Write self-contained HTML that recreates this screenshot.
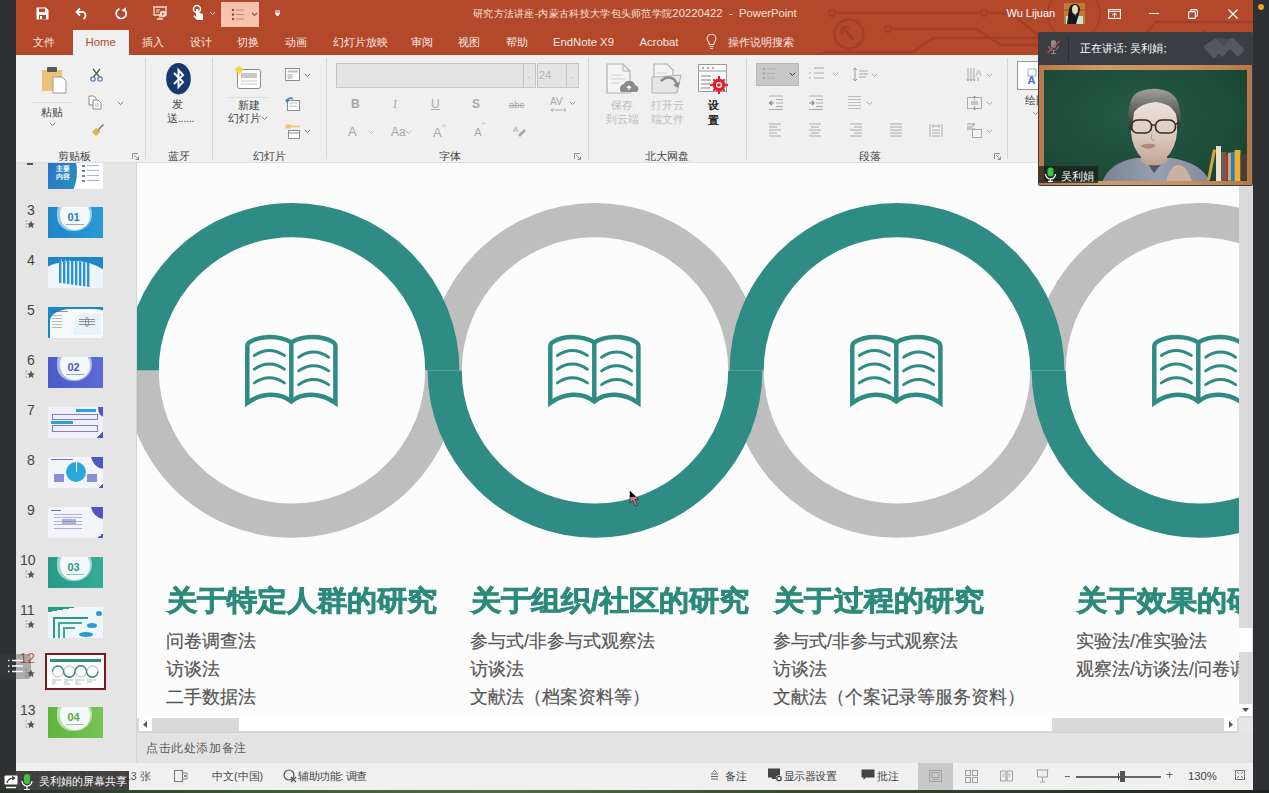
<!DOCTYPE html>
<html><head><meta charset="utf-8">
<style>
*{margin:0;padding:0;box-sizing:border-box}
html,body{width:1269px;height:793px;overflow:hidden;background:#2e3034;font-family:"Liberation Sans",sans-serif}
.a{position:absolute}
.t{position:absolute;white-space:nowrap;line-height:1}
#title{left:16px;top:0;width:1237px;height:55px;background:#b4482b;overflow:hidden}
#ribbon{left:16px;top:55px;width:1237px;height:108px;background:#f0f0f0}
#pane{left:16px;top:162px;width:121px;height:601px;background:#e5e5e5}
#slide{left:137px;top:162px;width:1102px;height:556px;background:#fcfcfc;overflow:hidden}
#vscroll{left:1239px;top:162px;width:14px;height:556px;background:#dadada}
#hscroll{left:137px;top:718px;width:1102px;height:14px;background:#d9d9d9}
#notes{left:137px;top:732px;width:1116px;height:31px;background:#e3e3e3;border-top:1px solid #d0d0d0}
#status{left:16px;top:763px;width:1237px;height:27px;background:#f0f0f0}
#bottom{left:0;top:790px;width:1269px;height:3px;background:#3c4a35}
.tab{position:absolute;top:37px;font-size:11px;line-height:11px;color:#fbe9e3;white-space:nowrap}
.rl{position:absolute;font-size:11px;line-height:11px;color:#444;white-space:nowrap}
.sep{position:absolute;top:58px;width:1px;height:100px;background:#d5d5d5}
.gi{position:absolute}
.num{position:absolute;left:26px;font-size:13px;line-height:13px;color:#444}
.thumb{position:absolute;left:47px;width:56px;height:31px;overflow:hidden}
.star{position:absolute;left:27px;font-size:9px;line-height:9px;color:#555}
.h{position:absolute;top:585px;font-size:29.8px;line-height:30px;font-weight:bold;color:#2b8a7b;-webkit-text-stroke:0.9px #2b8a7b;transform:scale(1,0.93);transform-origin:0 0;white-space:nowrap}
.b{position:absolute;font-size:17.6px;line-height:18px;color:#555;-webkit-text-stroke:0.2px #555;white-space:nowrap}
.st{position:absolute;top:771px;font-size:11px;line-height:11px;color:#444;white-space:nowrap}
</style></head><body>
<!-- TITLEBAR -->
<div id="title" class="a">
<svg class="a" style="left:0;top:0" width="1237" height="55">
<g stroke="#a43f26" stroke-width="2.4" fill="none" opacity="0.95">
<path d="M819,13 H965 M971,13 H995 L1025,38"/><circle cx="816" cy="13" r="3"/><circle cx="968" cy="13" r="3"/>
<path d="M875,29 H960 L985,45 H1060"/><circle cx="872" cy="29" r="3"/>
<circle cx="833" cy="34" r="14.5"/><path d="M826,27 L838,40 M826,27 H834 M826,27 V35" stroke-width="2.6"/>
<path d="M800,55 L810,52 H897 L917,38 H1065"/><circle cx="1068" cy="38" r="3"/><path d="M1071,40 L1090,55"/>
<path d="M1110,55 L1140,22 H1237" /><path d="M1160,55 L1190,30"/>
<circle cx="1058" cy="14" r="26" stroke-width="1.5"/>
</g>
</svg>
<!-- QAT -->
<svg class="a" style="left:20px;top:7px" width="13" height="13" viewBox="0 0 13 13"><path d="M0.5,0.5 H10 L12.5,3 V12.5 H0.5 Z" fill="#fff"/><rect x="3" y="1.5" width="6" height="3.5" fill="#b4482b"/><rect x="3" y="8" width="7" height="4.5" fill="#b4482b"/><rect x="4" y="9" width="2" height="3" fill="#fff"/></svg>
<svg class="a" style="left:59px;top:7px" width="14" height="13" viewBox="0 0 14 13"><path d="M5,1.5 L1.5,5 L5,8.5 M1.8,5 H8.5 A4,4 0 0 1 8.5,12" fill="none" stroke="#fff" stroke-width="1.8"/></svg>
<svg class="a" style="left:99px;top:7px" width="13" height="13" viewBox="0 0 13 13"><path d="M4.5,1.8 A5,5 0 1 0 10,3.2" fill="none" stroke="#fff" stroke-width="1.7"/><path d="M11,0.3 L10.8,5.2 L6.5,3.5 Z" fill="#fff"/></svg>
<svg class="a" style="left:136px;top:5px" width="17" height="17" viewBox="0 0 17 17"><path d="M1,2 H15 M2,2 V10 H14 V2 M8,10 V13 M5,14 H11" fill="none" stroke="#f6ddd5" stroke-width="1.3"/><circle cx="11" cy="9" r="3.2" fill="#f6ddd5"/><path d="M10,7.5 L12.5,9 L10,10.5Z" fill="#b4482b"/><path d="M4,5 H8 M4,7 H7" stroke="#f6ddd5" stroke-width="1"/></svg>
<svg class="a" style="left:176px;top:4px" width="12" height="17" viewBox="0 0 12 17"><circle cx="5" cy="5" r="3.5" fill="none" stroke="#fff" stroke-width="1.5"/><path d="M4,5 V13 L2,11 L1.5,12.5 L5,16 H11 V10 L6.5,8.5 V5" fill="#fff"/></svg>
<svg class="a" style="left:193px;top:11px" width="7" height="5"><path d="M1,1 L3.5,3.5 L6,1" fill="none" stroke="#f6ddd5" stroke-width="1"/></svg>
<div class="a" style="left:205px;top:2px;width:38px;height:25px;background:#f5c3ae"></div>
<svg class="a" style="left:215px;top:8px" width="16" height="13" viewBox="0 0 16 13"><g fill="#a8452a"><circle cx="2" cy="2" r="1.2"/><circle cx="2" cy="6.5" r="1.2"/><circle cx="2" cy="11" r="1.2"/></g><path d="M5,2 H13 M5,6.5 H13 M5,11 H13" stroke="#c8765c" stroke-width="0.9"/></svg>
<svg class="a" style="left:235px;top:12px" width="7" height="5"><path d="M1,1 L3.5,3.5 L6,1" fill="none" stroke="#b4482b" stroke-width="1.2"/></svg>
<svg class="a" style="left:258px;top:10px" width="7" height="7"><path d="M1,1 H6 M1,3 L3.5,6 L6,3Z" fill="#fff" stroke="#fff" stroke-width="1"/></svg>
<div class="t" style="left:457px;top:8px;font-size:10px;letter-spacing:0.3px;color:#fbe3da">研究方法讲座-内蒙古科技大学包头师范学院<span style="font-size:11.3px;letter-spacing:0">20220422&nbsp;&nbsp;-&nbsp;&nbsp;PowerPoint</span></div>
<div class="t" style="left:990.5px;top:8px;font-size:11px;color:#fff">Wu Lijuan</div>
<svg class="a" style="left:1048px;top:3px" width="21" height="21" viewBox="0 0 21 21"><rect width="21" height="21" fill="#c47a34"/><rect y="6" width="21" height="2" fill="#b06828"/><rect x="2" y="13" width="17" height="8" fill="#d0e0dc"/><path d="M3,21 L5,6 Q6,1 11,1 Q15,1 16,6 L15,11 L12,21 Z" fill="#15181a"/><ellipse cx="11" cy="6.5" rx="3" ry="4.5" fill="#e6dcb4"/><path d="M10,10 L12,10 L11.5,13 Z" fill="#d8d0b0"/></svg>
<svg class="a" style="left:1092px;top:9px" width="13" height="10" viewBox="0 0 13 10"><rect x="0.6" y="0.6" width="11.8" height="8.8" fill="none" stroke="#fff" stroke-width="1.1"/><path d="M0.6,2.5 H12.4" stroke="#fff" stroke-width="0.9"/><path d="M6.5,8 V4.5 M4.5,6.2 L6.5,4.2 L8.5,6.2" fill="none" stroke="#fff" stroke-width="1.1"/></svg>
<div class="a" style="left:1133px;top:13px;width:10px;height:1.2px;background:#fff"></div>
<svg class="a" style="left:1172px;top:9px" width="10" height="10" viewBox="0 0 10 10"><rect x="0.6" y="2.6" width="6.8" height="6.8" rx="1.2" fill="none" stroke="#fff" stroke-width="1.1"/><path d="M2.5,2.6 V2 A1.4,1.4 0 0 1 3.9,0.6 H8 A1.4,1.4 0 0 1 9.4,2 V6.1 A1.4,1.4 0 0 1 8,7.5 H7.4" fill="none" stroke="#fff" stroke-width="1.1"/></svg>
<svg class="a" style="left:1212px;top:9px" width="10" height="10" viewBox="0 0 10 10"><path d="M0.5,0.5 L9.5,9.5 M9.5,0.5 L0.5,9.5" stroke="#fff" stroke-width="1.2"/></svg>
<!-- TABS -->
<div class="a" style="left:57px;top:30px;width:56px;height:26px;background:#f0f0f0"></div>
<div class="tab" style="left:17px">文件</div>
<div class="tab" style="left:69.5px;color:#b4482b;font-size:11.4px">Home</div>
<div class="tab" style="left:126px">插入</div>
<div class="tab" style="left:173.5px">设计</div>
<div class="tab" style="left:221px">切换</div>
<div class="tab" style="left:268.5px">动画</div>
<div class="tab" style="left:316.5px">幻灯片放映</div>
<div class="tab" style="left:395px">审阅</div>
<div class="tab" style="left:441.5px">视图</div>
<div class="tab" style="left:489.5px">帮助</div>
<div class="tab" style="left:537px;font-size:11.3px">EndNote X9</div>
<div class="tab" style="left:623.5px;font-size:11.3px">Acrobat</div>
<svg class="a" style="left:690px;top:34px" width="11" height="16" viewBox="0 0 11 16"><path d="M3.3,10.5 C3.3,8 1,7 1,4.8 A4.5,4.5 0 0 1 10,4.8 C10,7 7.7,8 7.7,10.5 Z M3.6,12.5 H7.4 M4.3,14.5 H6.7" fill="none" stroke="#fbe9e3" stroke-width="1.1"/></svg>
<div class="tab" style="left:712px">操作说明搜索</div>
</div>
<!-- RIBBON -->
<div id="ribbon" class="a">
</div>
<div class="a" style="left:0;top:0;width:1269px;height:162px;pointer-events:none">
<svg class="a" style="left:41px;top:66px" width="27" height="28" viewBox="0 0 27 28"><rect x="1" y="4" width="20" height="21" fill="#eac27a"/><rect x="6" y="1" width="10" height="5" rx="1" fill="#5a5a5a"/><path d="M12,11 H21 L25,15 V27 H12 Z" fill="#fff" stroke="#9a9a9a" stroke-width="1"/></svg>
<div class="a" style="left:32px;top:102px;width:40px;height:1px;background:#dedede"></div>
<div class="t" style="left:41px;top:107px;font-size:11px;color:#444;">粘贴</div>
<svg class="a" style="left:49px;top:122px" width="7" height="5"><path d="M0.8,0.8 L3.5,3.5 L6.2,0.8" fill="none" stroke="#777" stroke-width="1"/></svg>
<svg class="a" style="left:90px;top:68px" width="13" height="14" viewBox="0 0 13 14"><path d="M3,1 L9.5,9 M10,1 L3.5,9" stroke="#555" stroke-width="1.2"/><circle cx="3" cy="11" r="2.2" fill="none" stroke="#4a7ab8" stroke-width="1.2"/><circle cx="10" cy="11" r="2.2" fill="none" stroke="#4a7ab8" stroke-width="1.2"/></svg>
<svg class="a" style="left:88px;top:95px" width="14" height="15" viewBox="0 0 14 15"><path d="M1,1 H6 L8,3 V10 H1 Z" fill="#fff" stroke="#8c8c8c" stroke-width="1"/><path d="M5,5 H10 L13,8 V14 H5 Z" fill="#fff" stroke="#8c8c8c" stroke-width="1"/><path d="M7,9 H11 M7,11 H11" stroke="#aaa" stroke-width="0.8"/></svg>
<svg class="a" style="left:117px;top:101px" width="7" height="5"><path d="M0.8,0.8 L3.5,3.5 L6.2,0.8" fill="none" stroke="#777" stroke-width="1"/></svg>
<svg class="a" style="left:90px;top:123px" width="15" height="14" viewBox="0 0 15 14"><path d="M8,6 L13,1 L14,2 L9,7 Z" fill="#777"/><path d="M2,9 L6,5 L10,9 L6,13 Z" fill="#e8b04a"/><path d="M6,5 L8,6.5 L9,7 L10,9" fill="#555"/></svg>
<div class="t" style="left:58px;top:151px;font-size:11px;color:#444;">剪贴板</div>
<svg class="a" style="left:132px;top:153px" width="7" height="7"><path d="M0.5,6 V0.5 H6 M2,2 L6.5,6.5 M3.5,6.5 H6.5 V3.5" fill="none" stroke="#888" stroke-width="0.9"/></svg>
<div class="a" style="left:145px;top:58px;width:1px;height:101px;background:#d6d6d6"></div>
<svg class="a" style="left:166px;top:63px" width="26" height="32" viewBox="0 0 26 32"><ellipse cx="12.5" cy="15.7" rx="12.3" ry="15.7" fill="#163a6b"/><path d="M8,10 L17,19 L12.5,24 V7 L17,12 L8,21" fill="none" stroke="#fff" stroke-width="2"/></svg>
<div class="t" style="left:172px;top:99px;font-size:11px;color:#444;">发</div>
<div class="t" style="left:167px;top:113px;font-size:11px;color:#444;letter-spacing:-0.3px">送......</div>
<div class="t" style="left:168px;top:151px;font-size:11px;color:#444;">蓝牙</div>
<div class="a" style="left:212px;top:58px;width:1px;height:101px;background:#d6d6d6"></div>
<svg class="a" style="left:233px;top:65px" width="30" height="26" viewBox="0 0 30 26"><rect x="4.5" y="4.5" width="23" height="19" rx="2" fill="#fff" stroke="#8a8a8a" stroke-width="1"/><rect x="8" y="8" width="16" height="5" fill="#c8c8c8"/><path d="M8,16 H24 M8,19 H24" stroke="#c8c8c8" stroke-width="1"/><circle cx="6" cy="5" r="3" fill="#f5d340"/><path d="M6,0 V10 M1,5 H11 M2.5,1.5 L9.5,8.5 M9.5,1.5 L2.5,8.5" stroke="#f5d340" stroke-width="0.8"/></svg>
<div class="a" style="left:228px;top:97px;width:40px;height:1px;background:#dcdcdc"></div>
<div class="t" style="left:238px;top:100px;font-size:11px;color:#444;">新建</div>
<div class="t" style="left:228px;top:113px;font-size:11px;color:#444;">幻灯片</div>
<svg class="a" style="left:261px;top:116px" width="7" height="5"><path d="M0.8,0.8 L3.5,3.5 L6.2,0.8" fill="none" stroke="#777" stroke-width="1"/></svg>
<svg class="a" style="left:285px;top:68px" width="16" height="14" viewBox="0 0 16 14"><rect x="0.5" y="0.5" width="14" height="12" fill="#fff" stroke="#8c8c8c"/><rect x="2.5" y="2.5" width="10" height="2" fill="#bbb"/><rect x="2.5" y="6" width="5" height="5" fill="#ccc"/></svg>
<svg class="a" style="left:304px;top:73px" width="7" height="5"><path d="M0.8,0.8 L3.5,3.5 L6.2,0.8" fill="none" stroke="#777" stroke-width="1"/></svg>
<svg class="a" style="left:285px;top:97px" width="16" height="14" viewBox="0 0 16 14"><rect x="2.5" y="3.5" width="12" height="10" fill="#fff" stroke="#8c8c8c"/><path d="M4,6 H12 M4,9 H12" stroke="#bbb"/><path d="M1.5,5 A4,4 0 0 1 8,2" fill="none" stroke="#3a7cd0" stroke-width="1.6"/><path d="M0,3 L3,6.5 L4,2Z" fill="#3a7cd0"/></svg>
<svg class="a" style="left:285px;top:124px" width="16" height="15" viewBox="0 0 16 15"><rect x="0.5" y="0.5" width="6" height="4" fill="#f2c46a"/><path d="M7,2.5 H15" stroke="#f2c46a" stroke-width="1.5"/><rect x="3.5" y="6.5" width="11" height="8" fill="#fff" stroke="#8c8c8c"/><path d="M4,9 H14" stroke="#8c8c8c"/></svg>
<svg class="a" style="left:304px;top:129px" width="7" height="5"><path d="M0.8,0.8 L3.5,3.5 L6.2,0.8" fill="none" stroke="#777" stroke-width="1"/></svg>
<div class="t" style="left:253px;top:151px;font-size:11px;color:#444;">幻灯片</div>
<div class="a" style="left:326px;top:58px;width:1px;height:101px;background:#d6d6d6"></div>
<div class="a" style="left:336px;top:63px;width:200px;height:25px;background:#e4e4e4;border:1px solid #c4c4c4"></div>
<div class="a" style="left:523px;top:63px;width:1px;height:25px;background:#c4c4c4"></div>
<div class="t" style="left:527px;top:73px;font-size:8px;color:#aaa;">-</div>
<div class="a" style="left:537px;top:63px;width:42px;height:25px;background:#e4e4e4;border:1px solid #c4c4c4"></div>
<div class="a" style="left:566px;top:63px;width:1px;height:25px;background:#c4c4c4"></div>
<div class="t" style="left:539px;top:70px;font-size:11px;color:#b4b4b4;">24</div>
<div class="t" style="left:570px;top:73px;font-size:8px;color:#aaa;">-</div>
<div class="t" style="left:351px;top:98px;font-size:12px;color:#a8a8a8;font-weight:bold">B</div>
<div class="t" style="left:393px;top:98px;font-size:12px;color:#a8a8a8;font-style:italic;font-family:Liberation Serif">I</div>
<div class="t" style="left:431px;top:98px;font-size:12px;color:#a8a8a8;text-decoration:underline">U</div>
<div class="t" style="left:472px;top:98px;font-size:12px;color:#a8a8a8;font-weight:bold">S</div>
<div class="t" style="left:509px;top:100px;font-size:9.5px;color:#a8a8a8;text-decoration:line-through">abc</div>
<div class="t" style="left:550px;top:97px;font-size:10px;color:#a8a8a8;">AV</div>
<svg class="a" style="left:550px;top:108px" width="17" height="4" viewBox="0 0 17 4"><path d="M1,2 H16 M1,2 L3,0.5 M1,2 L3,3.5 M16,2 L14,0.5 M16,2 L14,3.5" stroke="#a8a8a8" stroke-width="0.9" fill="none"/></svg>
<svg class="a" style="left:569px;top:101px" width="7" height="5"><path d="M0.8,0.8 L3.5,3.5 L6.2,0.8" fill="none" stroke="#999" stroke-width="1"/></svg>
<div class="t" style="left:348px;top:125px;font-size:13px;color:#a8a8a8;">A</div>
<svg class="a" style="left:368px;top:130px" width="7" height="5"><path d="M0.8,0.8 L3.5,3.5 L6.2,0.8" fill="none" stroke="#bbb" stroke-width="1"/></svg>
<div class="t" style="left:391px;top:126px;font-size:12px;color:#a8a8a8;">Aa</div>
<svg class="a" style="left:405px;top:130px" width="7" height="5"><path d="M0.8,0.8 L3.5,3.5 L6.2,0.8" fill="none" stroke="#bbb" stroke-width="1"/></svg>
<div class="t" style="left:433px;top:126px;font-size:13px;color:#a8a8a8;">A</div>
<div class="t" style="left:442px;top:123px;font-size:8px;color:#a8a8a8;">^</div>
<div class="t" style="left:474px;top:127px;font-size:11.5px;color:#a8a8a8;">A</div>
<div class="t" style="left:482px;top:122px;font-size:9px;color:#a8a8a8;">ˇ</div>
<svg class="a" style="left:513px;top:124px" width="13" height="13" viewBox="0 0 13 13"><text x="0" y="8" font-size="8" fill="#a8a8a8" font-family="Liberation Sans">A</text><path d="M5,11 L11,5 L13,7 L7,13 Z" fill="#a8a8a8"/></svg>
<div class="t" style="left:439px;top:151px;font-size:11px;color:#444;">字体</div>
<svg class="a" style="left:574px;top:153px" width="7" height="7"><path d="M0.5,6 V0.5 H6 M2,2 L6.5,6.5 M3.5,6.5 H6.5 V3.5" fill="none" stroke="#888" stroke-width="0.9"/></svg>
<div class="a" style="left:588px;top:58px;width:1px;height:101px;background:#d6d6d6"></div>
<svg class="a" style="left:605px;top:63px" width="34" height="32" viewBox="0 0 34 32"><path d="M2,1 H18 L25,8 V30 H2 Z" fill="#f4f4f4" stroke="#b0b0b0" stroke-width="1.2"/><path d="M18,1 V8 H25" fill="none" stroke="#b0b0b0"/><path d="M6,12 H18 M6,16 H20 M6,20 H14" stroke="#d0d0d0"/><path d="M16,29 A5,5 0 0 1 19,21 A6,6 0 0 1 30,22 A4,4 0 0 1 32,29 Z" fill="#8a8a8a"/><path d="M24,27 V23 M22,25 L24,23 L26,25" stroke="#fff" stroke-width="1.2" fill="none"/></svg>
<div class="t" style="left:611px;top:100px;font-size:11px;color:#bdbdbd;">保存</div>
<div class="t" style="left:606px;top:114px;font-size:11px;color:#bdbdbd;">到云端</div>
<svg class="a" style="left:651px;top:63px" width="34" height="32" viewBox="0 0 34 32"><path d="M3,1 H16 L22,7 V27 H3 Z" fill="#f4f4f4" stroke="#b0b0b0" stroke-width="1.2"/><path d="M6,10 H16 M6,14 H18" stroke="#d0d0d0"/><path d="M1,30 V14 H6 L30,12 L26,30 Z" fill="#e6e6e6" stroke="#b0b0b0"/><path d="M10,18 C16,12 24,14 26,22" fill="none" stroke="#8a8a8a" stroke-width="2.5"/><path d="M22,22 L27,25 L29,19Z" fill="#8a8a8a"/></svg>
<div class="t" style="left:651px;top:100px;font-size:11px;color:#bdbdbd;">打开云</div>
<div class="t" style="left:651px;top:114px;font-size:11px;color:#bdbdbd;">端文件</div>
<svg class="a" style="left:697px;top:63px" width="34" height="32" viewBox="0 0 34 32"><rect x="1.5" y="1.5" width="28" height="27" fill="#fafafa" stroke="#9a9a9a" stroke-width="1"/><path d="M1.5,8 H29.5" stroke="#9a9a9a"/><path d="M5,5 H7 M10,5 H12 M15,5 H17" stroke="#666"/><path d="M4,13 H14 M4,17 H14 M4,21 H13 M4,25 H13" stroke="#888"/><g fill="#e0202a"><circle cx="22" cy="22" r="6.5"/><path d="M21,13 H23 V31 H21Z M13,21 V23 H31 V21Z" /><path d="M15.6,17 L17,15.6 L28.4,27 L27,28.4Z M27,15.6 L28.4,17 L17,28.4 L15.6,27Z"/></g><circle cx="22" cy="22" r="3" fill="#fff"/><circle cx="22" cy="22" r="1.8" fill="#e0202a"/></svg>
<div class="t" style="left:708px;top:100px;font-size:11px;color:#222;font-weight:bold">设</div>
<div class="t" style="left:708px;top:115px;font-size:11px;color:#222;font-weight:bold">置</div>
<div class="t" style="left:645px;top:151px;font-size:11px;color:#444;">北大网盘</div>
<div class="a" style="left:746px;top:58px;width:1px;height:101px;background:#d6d6d6"></div>
<div class="a" style="left:756px;top:63px;width:43px;height:23px;background:#c8c8c8;border:1px solid #b8b8b8"></div>
<svg class="a" style="left:762px;top:67px" width="24" height="14" viewBox="0 0 24 14"><g fill="#a6a6a6"><circle cx="2" cy="2" r="1.2"/><circle cx="2" cy="6.5" r="1.2"/><circle cx="2" cy="11" r="1.2"/></g><path d="M5,2 H13 M5,6.5 H13 M5,11 H13" stroke="#b0b0b0"/></svg>
<svg class="a" style="left:789px;top:72px" width="7" height="5"><path d="M0.8,0.8 L3.5,3.5 L6.2,0.8" fill="none" stroke="#333" stroke-width="1"/></svg>
<svg class="a" style="left:809px;top:66px" width="16" height="15" viewBox="0 0 16 15"><path d="M1,2 V3 M1,6 V8 M1,11 V13" stroke="#aaa"/><path d="M5,2 H15 M5,7 H15 M5,12 H15" stroke="#aaa"/></svg>
<svg class="a" style="left:832px;top:72px" width="7" height="5"><path d="M0.8,0.8 L3.5,3.5 L6.2,0.8" fill="none" stroke="#aaa" stroke-width="1"/></svg>
<svg class="a" style="left:852px;top:67px" width="17" height="15" viewBox="0 0 17 15"><path d="M3,1 V14 M1,3 L3,1 L5,3 M1,12 L3,14 L5,12" stroke="#999" fill="none"/><path d="M7,4 H16 M7,7 H16 M7,10 H14" stroke="#aaa"/></svg>
<svg class="a" style="left:871px;top:73px" width="7" height="5"><path d="M0.8,0.8 L3.5,3.5 L6.2,0.8" fill="none" stroke="#aaa" stroke-width="1"/></svg>
<svg class="a" style="left:768px;top:95px" width="16" height="15" viewBox="0 0 16 15"><path d="M1,1 H15 M8,4.5 H15 M8,8 H15 M8,11.5 H15 M1,14.5 H15" stroke="#aaa"/><path d="M6,8 H1.5 M4,6 L1.5,8 L4,10" stroke="#888" fill="none" stroke-width="1.2"/></svg>
<svg class="a" style="left:808px;top:95px" width="16" height="15" viewBox="0 0 16 15"><path d="M1,1 H15 M8,4.5 H15 M8,8 H15 M8,11.5 H15 M1,14.5 H15" stroke="#aaa"/><path d="M1,8 H6 M4,6 L6,8 L4,10" stroke="#888" fill="none" stroke-width="1.2"/></svg>
<svg class="a" style="left:847px;top:95px" width="16" height="15" viewBox="0 0 16 15"><path d="M1,1.5 H14 M1,4.5 H14 M1,7.5 H14 M1,10.5 H14 M1,13.5 H14" stroke="#bbb"/></svg>
<svg class="a" style="left:866px;top:101px" width="7" height="5"><path d="M0.8,0.8 L3.5,3.5 L6.2,0.8" fill="none" stroke="#aaa" stroke-width="1"/></svg>
<svg class="a" style="left:768px;top:123px" width="15" height="15" viewBox="0 0 15 15"><path d="M1,1 H13 M1,4 H9 M1,7 H13 M1,10 H9 M1,13 H13" stroke="#aaa"/></svg>
<svg class="a" style="left:808px;top:123px" width="15" height="15" viewBox="0 0 15 15"><path d="M1,1 H13 M3,4 H11 M1,7 H13 M3,10 H11 M1,13 H13" stroke="#aaa"/></svg>
<svg class="a" style="left:849px;top:123px" width="15" height="15" viewBox="0 0 15 15"><path d="M1,1 H13 M5,4 H13 M1,7 H13 M5,10 H13 M1,13 H13" stroke="#aaa"/></svg>
<svg class="a" style="left:889px;top:123px" width="15" height="15" viewBox="0 0 15 15"><path d="M1,1 H13 M1,4 H13 M1,7 H13 M1,10 H13 M1,13 H13" stroke="#aaa"/></svg>
<svg class="a" style="left:929px;top:123px" width="15" height="15" viewBox="0 0 15 15"><path d="M1,1 V14 M13,1 V14 M3,3 H11 M3,3 L4.5,1.5 M3,3 L4.5,4.5 M11,3 L9.5,1.5 M11,3 L9.5,4.5 M3,7 H11 M3,10 H11 M3,13 H11" stroke="#aaa" fill="none"/></svg>
<svg class="a" style="left:966px;top:67px" width="17" height="15" viewBox="0 0 17 15"><path d="M2,1 V14 M5,1 V14 M8,1 V14 M1,12 L2,14 L3,12 M4,12 L5,14 L6,12 M7,12 L8,14 L9,12" stroke="#aaa" fill="none"/><text x="9.5" y="9" font-size="9" fill="#aaa" font-family="Liberation Sans">A</text><path d="M12,10 V14" stroke="#aaa"/></svg>
<svg class="a" style="left:986px;top:73px" width="7" height="5"><path d="M0.8,0.8 L3.5,3.5 L6.2,0.8" fill="none" stroke="#aaa" stroke-width="1"/></svg>
<svg class="a" style="left:966px;top:95px" width="17" height="15" viewBox="0 0 17 15"><rect x="1.5" y="2.5" width="14" height="11" fill="none" stroke="#aaa"/><path d="M8.5,1 V5 M6.5,3 L8.5,1 L10.5,3 M8.5,15 V11 M6.5,13 L8.5,15 L10.5,13 M5,7 H12 M5,9 H12" stroke="#999" fill="none"/></svg>
<svg class="a" style="left:986px;top:101px" width="7" height="5"><path d="M0.8,0.8 L3.5,3.5 L6.2,0.8" fill="none" stroke="#aaa" stroke-width="1"/></svg>
<svg class="a" style="left:966px;top:123px" width="17" height="15" viewBox="0 0 17 15"><path d="M1,1 H9 L6,4 H1 M1,6 H9" stroke="#999" fill="none"/><rect x="6.5" y="6.5" width="9" height="8" fill="#f4f4f4" stroke="#aaa"/></svg>
<svg class="a" style="left:986px;top:129px" width="7" height="5"><path d="M0.8,0.8 L3.5,3.5 L6.2,0.8" fill="none" stroke="#aaa" stroke-width="1"/></svg>
<div class="t" style="left:859px;top:151px;font-size:11px;color:#444;">段落</div>
<svg class="a" style="left:994px;top:153px" width="7" height="7"><path d="M0.5,6 V0.5 H6 M2,2 L6.5,6.5 M3.5,6.5 H6.5 V3.5" fill="none" stroke="#888" stroke-width="0.9"/></svg>
<div class="a" style="left:1007px;top:58px;width:1px;height:101px;background:#d6d6d6"></div>
<div class="a" style="left:1017px;top:61px;width:30px;height:29px;background:#fff;border:1px solid #9a9a9a"></div>
<svg class="a" style="left:1027px;top:68px" width="16" height="18" viewBox="0 0 16 18"><rect x="1" y="1" width="8" height="7" fill="none" stroke="#8aa8d8" stroke-width="0.9"/><text x="0.5" y="16" font-size="11" font-weight="bold" fill="#3a78c8" font-family="Liberation Sans">A</text></svg>
<div class="t" style="left:1025px;top:95px;font-size:11px;color:#444;">绘图</div>
<svg class="a" style="left:1032px;top:111px" width="7" height="5"><path d="M0.8,0.8 L3.5,3.5 L6.2,0.8" fill="none" stroke="#999" stroke-width="0.9"/></svg>
</div>
<!-- SLIDE PANE -->
<div id="pane" class="a">
</div>
<div class="a" style="left:0;top:162px;width:137px;height:601px;overflow:hidden"><div class="a" style="left:0;top:-162px;width:137px;height:793px">
<div class="a" style="left:27px;top:163px;width:6px;height:2px;background:#555"></div>
<div class="a" style="left:48px;top:162px;width:55px;height:27px;overflow:hidden;background:#fff"><div class="a" style="left:-40px;top:-30px;width:69px;height:80px;border-radius:50%;background:linear-gradient(120deg,#4650c0 30%,#2a7cc8 60%,#2a98b0)"></div><div class="t" style="left:8px;top:3px;font-size:6.5px;line-height:8px;color:#fff;font-weight:bold">主要<br>内容</div><div class="a" style="left:34px;top:3px;width:3px;height:17px;background:repeating-linear-gradient(#6a7ac8 0 2px,transparent 2px 5px)"></div><div class="a" style="left:39px;top:3px;width:12px;height:17px;background:repeating-linear-gradient(#a8b4e0 0 1px,transparent 1px 5px)"></div></div>
<div class="t" style="left:27px;top:205px;font-size:14px;color:#444;margin-top:-2.3px">3</div><svg class="a" style="left:25px;top:220px" width="10" height="9" viewBox="0 0 10 9"><path d="M0.5,1 H2 M0.5,4 H1.5 M0.5,7 H2" stroke="#777" stroke-width="0.8"/><path d="M6,0.5 L7.2,3.3 L9.8,3.4 L7.8,5.2 L8.5,8.3 L6,6.6 L3.5,8.3 L4.2,5.2 L2.2,3.4 L4.8,3.3 Z" fill="#555"/></svg>
<div class="a" style="left:48px;top:207px;width:55px;height:31px;overflow:hidden;background:linear-gradient(90deg,#1d86c8,#2a9ad6)"><div class="a" style="left:9px;top:-8px;width:35px;height:32px;border-radius:40% 45% 50% 45%;background:rgba(255,255,255,0.55)"></div><div class="a" style="left:12px;top:-6px;width:30px;height:29px;border-radius:42% 48% 50% 50%;background:#f4f8fa"></div><div class="t" style="left:19.5px;top:5px;font-size:11px;font-weight:bold;color:#1e7fc0">01</div><div class="a" style="left:18px;top:17px;width:18px;height:1px;background:#9ab"></div></div>
<div class="t" style="left:27px;top:255px;font-size:14px;color:#444;margin-top:-2.3px">4</div>
<div class="a" style="left:48px;top:257px;width:55px;height:31px;overflow:hidden;background:#1d86c8"><div class="a" style="left:-20px;top:4px;width:90px;height:64px;border-radius:50%;background:#eef6fb"></div><div class="a" style="left:11px;top:4px;width:32px;height:24px;background:repeating-linear-gradient(90deg,#2a90d8 0 2.5px,#9fd0f0 2.5px 3.5px,transparent 3.5px 4px);transform:skewY(8deg)"></div></div>
<div class="t" style="left:27px;top:305px;font-size:14px;color:#444;margin-top:-2.3px">5</div>
<div class="a" style="left:48px;top:307px;width:55px;height:31px;overflow:hidden;background:#1d86c8"><div class="a" style="left:2px;top:2px;width:70px;height:40px;border-radius:30% 40% 0 0;background:#f6fafc"></div><div class="a" style="left:26px;top:6px;width:27px;height:22px;border-radius:40% 0 0 0;background:#e8f2f8"></div><div class="a" style="left:4px;top:4px;width:16px;height:1px;background:#555;opacity:.6"></div><div class="a" style="left:4px;top:8px;width:10px;height:14px;background:repeating-linear-gradient(#777 0 1px,transparent 1px 3px);opacity:.5"></div><div class="a" style="left:31px;top:12px;width:16px;height:6px;background:repeating-linear-gradient(#555 0 1px,transparent 1px 2.5px);opacity:.6"></div><div class="a" style="left:37px;top:10px;width:4px;height:10px;border-radius:50%;border:1px solid #666;opacity:.6"></div></div>
<div class="t" style="left:27px;top:355px;font-size:14px;color:#444;margin-top:-2.3px">6</div><svg class="a" style="left:25px;top:370px" width="10" height="9" viewBox="0 0 10 9"><path d="M0.5,1 H2 M0.5,4 H1.5 M0.5,7 H2" stroke="#777" stroke-width="0.8"/><path d="M6,0.5 L7.2,3.3 L9.8,3.4 L7.8,5.2 L8.5,8.3 L6,6.6 L3.5,8.3 L4.2,5.2 L2.2,3.4 L4.8,3.3 Z" fill="#555"/></svg>
<div class="a" style="left:48px;top:357px;width:55px;height:31px;overflow:hidden;background:linear-gradient(90deg,#4a5bc8,#5a6cd2)"><div class="a" style="left:9px;top:-8px;width:35px;height:32px;border-radius:40% 45% 50% 45%;background:rgba(255,255,255,0.55)"></div><div class="a" style="left:12px;top:-6px;width:30px;height:29px;border-radius:42% 48% 50% 50%;background:#f4f8fa"></div><div class="t" style="left:19.5px;top:5px;font-size:11px;font-weight:bold;color:#4a58c0">02</div><div class="a" style="left:18px;top:17px;width:18px;height:1px;background:#9ab"></div></div>
<div class="t" style="left:27px;top:405px;font-size:14px;color:#444;margin-top:-2.3px">7</div>
<div class="a" style="left:48px;top:407px;width:55px;height:31px;overflow:hidden;background:#eef0fa"><div class="a" style="left:28px;top:2px;width:20px;height:3px;background:#2aa0d8"></div><div class="a" style="left:4px;top:7px;width:46px;height:6px;border:1px solid #8a7ac8"></div><div class="a" style="left:3px;top:14px;width:22px;height:3px;background:#2aa0d8"></div><div class="a" style="left:4px;top:18px;width:46px;height:7px;border:1px solid #8a7ac8"></div><div class="a" style="left:48px;top:24px;width:8px;height:8px;background:linear-gradient(135deg,transparent 50%,#4a58c0 50%)"></div><div class="a" style="left:50px;top:0;width:6px;height:10px;background:#4a58c0;border-radius:0 0 0 100%"></div></div>
<div class="t" style="left:27px;top:455px;font-size:14px;color:#444;margin-top:-2.3px">8</div>
<div class="a" style="left:48px;top:457px;width:55px;height:31px;overflow:hidden;background:#f4f5fc"><div class="a" style="left:18px;top:5px;width:20px;height:20px;border-radius:50%;background:#2aa8dc"></div><div class="a" style="left:6px;top:17px;width:10px;height:8px;background:#8a90d8"></div><div class="a" style="left:39px;top:17px;width:10px;height:8px;background:#8a90d8"></div><div class="a" style="left:43px;top:-2px;width:14px;height:14px;background:#4a58c0;border-radius:0 0 0 100%"></div><div class="a" style="left:49px;top:25px;width:7px;height:7px;background:linear-gradient(135deg,transparent 50%,#4a58c0 50%)"></div><div class="a" style="left:3px;top:2px;width:22px;height:1px;background:#6a78c8"></div><div class="a" style="left:27.5px;top:5px;width:1px;height:10px;background:#fff"></div></div>
<div class="t" style="left:27px;top:505px;font-size:14px;color:#444;margin-top:-2.3px">9</div>
<div class="a" style="left:48px;top:507px;width:55px;height:31px;overflow:hidden;background:#f4f5fc"><div class="a" style="left:3px;top:3px;width:10px;height:1px;background:#6a78c8"></div><div class="a" style="left:6px;top:7px;width:28px;height:17px;background:repeating-linear-gradient(#9aa2d8 0 1px,transparent 1px 3.5px);opacity:.8"></div><div class="a" style="left:14px;top:12px;width:14px;height:5px;background:#7a84c8;opacity:.6"></div><div class="a" style="left:43px;top:-2px;width:14px;height:14px;background:#4a58c0;border-radius:0 0 0 100%"></div><div class="a" style="left:49px;top:25px;width:7px;height:7px;background:linear-gradient(135deg,transparent 50%,#4a58c0 50%)"></div></div>
<div class="t" style="left:20px;top:555px;font-size:14px;color:#444;margin-top:-2.3px">10</div><svg class="a" style="left:25px;top:570px" width="10" height="9" viewBox="0 0 10 9"><path d="M0.5,1 H2 M0.5,4 H1.5 M0.5,7 H2" stroke="#777" stroke-width="0.8"/><path d="M6,0.5 L7.2,3.3 L9.8,3.4 L7.8,5.2 L8.5,8.3 L6,6.6 L3.5,8.3 L4.2,5.2 L2.2,3.4 L4.8,3.3 Z" fill="#555"/></svg>
<div class="a" style="left:48px;top:557px;width:55px;height:31px;overflow:hidden;background:linear-gradient(90deg,#2a9a88,#35ab98)"><div class="a" style="left:9px;top:-8px;width:35px;height:32px;border-radius:40% 45% 50% 45%;background:rgba(255,255,255,0.55)"></div><div class="a" style="left:12px;top:-6px;width:30px;height:29px;border-radius:42% 48% 50% 50%;background:#f4f8fa"></div><div class="t" style="left:19.5px;top:5px;font-size:11px;font-weight:bold;color:#2a9a88">03</div><div class="a" style="left:18px;top:17px;width:18px;height:1px;background:#8cc"></div></div>
<div class="t" style="left:20px;top:605px;font-size:14px;color:#444;margin-top:-2.3px">11</div><svg class="a" style="left:25px;top:620px" width="10" height="9" viewBox="0 0 10 9"><path d="M0.5,1 H2 M0.5,4 H1.5 M0.5,7 H2" stroke="#777" stroke-width="0.8"/><path d="M6,0.5 L7.2,3.3 L9.8,3.4 L7.8,5.2 L8.5,8.3 L6,6.6 L3.5,8.3 L4.2,5.2 L2.2,3.4 L4.8,3.3 Z" fill="#555"/></svg>
<div class="a" style="left:48px;top:607px;width:55px;height:31px;overflow:hidden;background:#eef6f7"><div class="a" style="left:0;top:0;width:30px;height:5px;background:linear-gradient(170deg,#2a9a88 50%,transparent 50%)"></div><div class="a" style="left:5px;top:10px;width:35px;height:25px;border-left:2px solid #2a9a88;border-top:2px solid #2a9a88"></div><div class="a" style="left:10px;top:15px;width:24px;height:20px;border-left:2px solid #3aab98;border-top:2px solid #3aab98"></div><div class="a" style="left:15px;top:20px;width:12px;height:15px;border-left:2px solid #3aab98;border-top:2px solid #3aab98"></div><div class="a" style="left:48px;top:4px;width:6px;height:5px;border-radius:50%;background:#2a98d8"></div><div class="a" style="left:39px;top:16px;width:10px;height:5px;border-radius:50%;background:#2a98d8"></div><div class="a" style="left:31px;top:25px;width:14px;height:5px;border-radius:50%;background:#2a98d8"></div></div>
<div class="t" style="left:19.5px;top:653px;font-size:14px;color:#d9542c;margin-top:-2.3px">12</div><svg class="a" style="left:25px;top:669px" width="10" height="9" viewBox="0 0 10 9"><path d="M0.5,1 H2 M0.5,4 H1.5 M0.5,7 H2" stroke="#777" stroke-width="0.8"/><path d="M6,0.5 L7.2,3.3 L9.8,3.4 L7.8,5.2 L8.5,8.3 L6,6.6 L3.5,8.3 L4.2,5.2 L2.2,3.4 L4.8,3.3 Z" fill="#555"/></svg>
<div class="a" style="left:45px;top:653px;width:61px;height:37px;border:2.5px solid #7a1a1e;background:#fff"></div>
<div class="a" style="left:48px;top:656px;width:55px;height:31px;background:#fff;overflow:hidden"><div class="a" style="left:2px;top:2.5px;width:51px;height:3px;background:#2f8c84"></div><svg class="a" style="left:0;top:0" width="55" height="31"><g fill="none" stroke-width="1.3"><circle cx="10" cy="15.5" r="5.5" stroke="#c8c8c8"/><circle cx="21.5" cy="15.5" r="5.5" stroke="#c8c8c8"/><circle cx="33" cy="15.5" r="5.5" stroke="#c8c8c8"/><circle cx="44.5" cy="15.5" r="5.5" stroke="#c8c8c8"/><path d="M4.5,15.5 A5.5,5.5 0 0 1 15.5,15.5 A5.5,5.5 0 0 0 27,15.5 A5.5,5.5 0 0 1 38.5,15.5 A5.5,5.5 0 0 0 50,15.5" stroke="#2f8c84"/></g><path d="M4,24 H13 M16,24 H25 M27,24 H36 M39,24 H48 M4,26 H8 M16,26 H20 M27,26 H31 M39,26 H44 M4,28 H7 M16,28 H22 M27,28 H33" stroke="#999" stroke-width="0.7"/></svg></div>
<div class="t" style="left:20px;top:705px;font-size:14px;color:#444;margin-top:-2.3px">13</div><svg class="a" style="left:25px;top:720px" width="10" height="9" viewBox="0 0 10 9"><path d="M0.5,1 H2 M0.5,4 H1.5 M0.5,7 H2" stroke="#777" stroke-width="0.8"/><path d="M6,0.5 L7.2,3.3 L9.8,3.4 L7.8,5.2 L8.5,8.3 L6,6.6 L3.5,8.3 L4.2,5.2 L2.2,3.4 L4.8,3.3 Z" fill="#555"/></svg>
<div class="a" style="left:48px;top:707px;width:55px;height:31px;overflow:hidden;background:linear-gradient(90deg,#5db53e,#78c455)"><div class="a" style="left:9px;top:-8px;width:35px;height:32px;border-radius:40% 45% 50% 45%;background:rgba(255,255,255,0.55)"></div><div class="a" style="left:12px;top:-6px;width:30px;height:29px;border-radius:42% 48% 50% 50%;background:#f4f8fa"></div><div class="t" style="left:19.5px;top:5px;font-size:11px;font-weight:bold;color:#5aae3a">04</div><div class="a" style="left:18px;top:17px;width:18px;height:1px;background:#9c9"></div></div>
<div class="a" style="left:136px;top:162px;width:1px;height:601px;background:#d4d4d4"></div>
<div class="a" style="left:0;top:654px;width:31px;height:25px;border-radius:0 4px 4px 0;background:rgba(60,60,60,0.35)"></div>
<svg class="a" style="left:7px;top:657px" width="18" height="18"><g stroke="#fff" stroke-width="1.6"><path d="M5,3.5 H16 M5,9 H16 M5,14.5 H16"/><path d="M1,3.5 H2.5 M1,9 H2.5 M1,14.5 H2.5"/></g></svg>
</div></div>
<!-- SLIDE -->
<div id="slide" class="a">
<svg class="a" style="left:0;top:0" width="1102" height="556" viewBox="0 0 1102 556"><path d="M4.699999999999989,208.4 A150.3,150.3 0 0 0 305.3,208.4" fill="none" stroke="#bebebe" stroke-width="34.2"/><path d="M307.7,208.4 A150.3,150.3 0 0 1 608.3,208.4" fill="none" stroke="#bebebe" stroke-width="34.2"/><path d="M609.7,208.4 A150.3,150.3 0 0 0 910.3,208.4" fill="none" stroke="#bebebe" stroke-width="34.2"/><path d="M911.7,208.4 A150.3,150.3 0 0 1 1212.3,208.4" fill="none" stroke="#bebebe" stroke-width="34.2"/><path d="M4.699999999999989,208.4 A150.3,150.3 0 0 1 305.3,208.4" fill="none" stroke="#2f8c85" stroke-width="34.2"/><path d="M307.7,208.4 A150.3,150.3 0 0 0 608.3,208.4" fill="none" stroke="#2f8c85" stroke-width="34.2"/><path d="M609.7,208.4 A150.3,150.3 0 0 1 910.3,208.4" fill="none" stroke="#2f8c85" stroke-width="34.2"/><path d="M911.7,208.4 A150.3,150.3 0 0 0 1212.3,208.4" fill="none" stroke="#2f8c85" stroke-width="34.2"/><defs><g id="book" fill="none" stroke="#2f8c84" stroke-linecap="round"><path d="M2.3,69 L2.3,12.5 Q2.3,9.5 5,8 C16,1.5 34,1.5 46.3,8.5 C58,1.5 76,1.5 87.7,8 Q90.4,9.5 90.4,12.5 L90.4,69 C76,59 58,58 46.3,67.5 C34,58 16,59 2.3,69 Z" stroke-width="4.5" stroke-linejoin="miter" stroke-miterlimit="6" stroke-linecap="butt"/><path d="M46.3,8.5 L46.3,67.5" stroke-width="4.5" stroke-linecap="butt"/><path d="M9.3,21.6 Q24.3,11.4 39.4,21.6" stroke-width="2.9"/><path d="M53.6,23.3 Q68.6,13.1 83.6,23.3" stroke-width="2.9"/><path d="M9.3,35.3 Q24.3,25.1 39.4,35.3" stroke-width="2.9"/><path d="M53.6,37.0 Q68.6,26.799999999999997 83.6,37.0" stroke-width="2.9"/><path d="M9.3,49.0 Q24.3,38.8 39.4,49.0" stroke-width="2.9"/><path d="M53.6,50.7 Q68.6,40.5 83.6,50.7" stroke-width="2.9"/></g></defs><use href="#book" x="108" y="171.9"/><use href="#book" x="411" y="171.9"/><use href="#book" x="713" y="171.9"/><use href="#book" x="1015" y="171.9"/></svg>
<div class="h" style="left:30px;top:425px">关于特定人群的研究</div><div class="b" style="left:29px;top:470px">问卷调查法</div><div class="b" style="left:29px;top:498px">访谈法</div><div class="b" style="left:29px;top:526px">二手数据法</div><div class="h" style="left:334px;top:425px">关于组织/社区的研究</div><div class="b" style="left:333px;top:470px">参与式/非参与式观察法</div><div class="b" style="left:333px;top:498px">访谈法</div><div class="b" style="left:333px;top:526px">文献法（档案资料等）</div><div class="h" style="left:637px;top:425px">关于过程的研究</div><div class="b" style="left:636px;top:470px">参与式/非参与式观察法</div><div class="b" style="left:636px;top:498px">访谈法</div><div class="b" style="left:636px;top:526px">文献法（个案记录等服务资料）</div><div class="h" style="left:940px;top:425px">关于效果的研究</div><div class="b" style="left:939px;top:470px">实验法/准实验法</div><div class="b" style="left:939px;top:498px">观察法/访谈法/问卷调查法</div>
</div>
<div id="vscroll" class="a"></div>
<div id="hscroll" class="a"></div>
<div id="notes" class="a"></div>
<div id="status" class="a"></div>
<div class="a" style="left:1239px;top:628px;width:13px;height:24px;background:#fff"></div>
<div class="a" style="left:1239px;top:704px;width:13px;height:12px;background:#fff"></div>
<svg class="a" style="left:1242px;top:708px" width="7" height="4" viewBox="0 0 7 4"><path d="M0,0 H7 L3.5,4Z" fill="#555"/></svg>
<div class="a" style="left:139px;top:718px;width:13px;height:13px;background:#fff"></div>
<svg class="a" style="left:143px;top:721px" width="4" height="7" viewBox="0 0 4 7"><path d="M4,0 V7 L0,3.5Z" fill="#555"/></svg>
<div class="a" style="left:239px;top:718px;width:813px;height:13px;background:#fff"></div>
<div class="a" style="left:1224px;top:718px;width:13px;height:13px;background:#fff"></div>
<svg class="a" style="left:1229px;top:721px" width="4" height="7" viewBox="0 0 4 7"><path d="M0,0 V7 L4,3.5Z" fill="#555"/></svg>
<div class="a" style="left:1239px;top:718px;width:14px;height:15px;background:#e6e6e6"></div>
<div class="t" style="left:146px;top:742px;font-size:12px;letter-spacing:0.6px;color:#5a5a5a;">点击此处添加备注</div>
<div class="t" style="left:23px;top:771px;font-size:11px;color:#555;">幻灯片 第 12 张，共 13 张</div>
<svg class="a" style="left:174px;top:770px" width="14" height="12" viewBox="0 0 14 12"><rect x="0.5" y="0.5" width="8" height="11" fill="none" stroke="#777"/><path d="M9,3 H13 V9 H9 M10,5 L12,7 M12,5 L10,7" fill="none" stroke="#777" stroke-width="0.9"/></svg>
<div class="t" style="left:212px;top:771px;font-size:10.6px;color:#444;">中文(中国)</div>
<svg class="a" style="left:283px;top:769px" width="14" height="14" viewBox="0 0 14 14"><circle cx="6" cy="6" r="5" fill="none" stroke="#555" stroke-width="1.2"/><path d="M8,8 L13,13 M13,8 L8,13" stroke="#555" stroke-width="1.2"/></svg>
<div class="t" style="left:298px;top:771px;font-size:11px;letter-spacing:-0.4px;color:#444;">辅助功能: 调查</div>
<svg class="a" style="left:710px;top:770px" width="9" height="10" viewBox="0 0 9 10"><path d="M1,4 H8 M1,6.5 H8 M1,9 H8" stroke="#666"/><path d="M2.5,2.5 L4.5,0.5 L6.5,2.5" fill="none" stroke="#666"/></svg>
<div class="t" style="left:725px;top:771px;font-size:10.8px;color:#444;">备注</div>
<svg class="a" style="left:768px;top:768px" width="15" height="14" viewBox="0 0 15 14"><rect x="0" y="0.5" width="12" height="9" fill="#444"/><path d="M4,10 H8" stroke="#444" stroke-width="2"/><circle cx="11" cy="10.5" r="3.2" fill="#f0f0f0"/><circle cx="11" cy="10.5" r="2.2" fill="none" stroke="#444" stroke-width="1.3"/></svg>
<div class="t" style="left:784px;top:771px;font-size:11px;letter-spacing:-0.6px;color:#444;">显示器设置</div>
<svg class="a" style="left:861px;top:769px" width="14" height="12" viewBox="0 0 14 12"><path d="M0.5,0.5 H13.5 V8.5 H5 L2.5,11 V8.5 H0.5Z" fill="#444"/></svg>
<div class="t" style="left:877px;top:771px;font-size:10.8px;color:#444;">批注</div>
<div class="a" style="left:918px;top:763px;width:35px;height:27px;background:#c8c8c8"></div>
<svg class="a" style="left:929px;top:770px" width="13" height="12" viewBox="0 0 13 12"><rect x="0.5" y="0.5" width="12" height="11" fill="none" stroke="#a0a0a0"/><rect x="3" y="2.5" width="7" height="5" fill="none" stroke="#a0a0a0"/><path d="M3,9.5 H10" stroke="#a0a0a0"/></svg>
<svg class="a" style="left:965px;top:770px" width="13" height="13" viewBox="0 0 13 13"><rect x="0.5" y="0.5" width="5" height="5" fill="none" stroke="#a0a0a0"/><rect x="7.5" y="0.5" width="5" height="5" fill="none" stroke="#a0a0a0"/><rect x="0.5" y="7.5" width="5" height="5" fill="none" stroke="#a0a0a0"/><rect x="7.5" y="7.5" width="5" height="5" fill="none" stroke="#a0a0a0"/></svg>
<svg class="a" style="left:1000px;top:770px" width="13" height="12" viewBox="0 0 13 12"><path d="M0.5,1 H6 V11 H0.5Z M7,1 H12.5 V11 H7Z" fill="none" stroke="#a0a0a0"/><path d="M2,4 H5 M2,6 H5 M8,4 H11 M8,6 H11" stroke="#bbb"/></svg>
<svg class="a" style="left:1036px;top:769px" width="13" height="14" viewBox="0 0 13 14"><path d="M0.5,1 H12.5 M1.5,1 V8 H11.5 V1 M6.5,8 V12 M4,13 H9" fill="none" stroke="#a0a0a0"/></svg>
<div class="a" style="left:1065px;top:776px;width:5px;height:1px;background:#666"></div>
<div class="a" style="left:1076px;top:776px;width:85px;height:1.5px;background:#666"></div>
<div class="a" style="left:1120px;top:771px;width:5px;height:11px;background:#555"></div>
<div class="a" style="left:1118px;top:773px;width:1px;height:7px;background:#555"></div>
<div class="t" style="left:1166px;top:769px;font-size:12px;color:#666;">+</div>
<div class="t" style="left:1188px;top:771px;font-size:11.3px;color:#444;">130%</div>
<svg class="a" style="left:1235px;top:770px" width="10" height="10" viewBox="0 0 10 10"><rect x="0.5" y="0.5" width="9" height="9" fill="none" stroke="#777"/><path d="M2,2 L4,4 M8,2 L6,4 M2,8 L4,6 M8,8 L6,6" stroke="#777"/></svg>
<div class="a" style="left:0;top:771px;width:129px;height:22px;background:rgba(52,52,52,0.92)"></div>
<svg class="a" style="left:4px;top:775px" width="14" height="14" viewBox="0 0 14 14"><rect x="0.5" y="0.5" width="13" height="9" rx="1" fill="#fff"/><path d="M3,8 C4,4 7,3 10,3 M8,1.5 L10.5,3 L8.5,5" fill="none" stroke="#333" stroke-width="1.2"/><path d="M2,12.5 H12" stroke="#fff" stroke-width="1.5"/></svg>
<svg class="a" style="left:21px;top:773px" width="12" height="18" viewBox="0 0 12 18"><rect x="3" y="1" width="6" height="10" rx="3" fill="#3fc43f"/><path d="M1,8 A5,5 0 0 0 11,8 M6,13 V16 M3,16.5 H9" fill="none" stroke="#fff" stroke-width="1.2"/></svg>
<div class="t" style="left:39px;top:776px;font-size:10.6px;color:#fff;">吴利娟的屏幕共享</div>
<div class="a" style="left:1258px;top:3.5px;width:6px;height:6px;border-radius:50%;background:#f0a020"></div>
<div class="a" style="left:0;top:790px;width:1269px;height:3px;background:linear-gradient(90deg,#26302a,#3d5a33 20%,#556b45 40%,#3a4e30 60%,#2d3b2a 80%,#1e2520)"></div>
<div class="a" style="left:16px;top:161px;width:1237px;height:1px;background:#f0f0f0"></div><div class="a" style="left:16px;top:162px;width:1237px;height:1px;background:#dedede"></div>
<svg class="a" style="left:629px;top:490px" width="11" height="18" viewBox="0 0 11 18"><defs><linearGradient id="cg" x1="0" y1="0" x2="0" y2="1"><stop offset="0.42" stop-color="#000"/><stop offset="0.42" stop-color="#d07a8a"/></linearGradient></defs><path d="M1,1 V13 L3.8,10.5 L6.2,16 L8.4,15 L6,9.6 L9.6,9.4 Z" fill="url(#cg)" stroke="#1a1a1a" stroke-width="0.6"/></svg>
<!-- VIDEO OVERLAY -->
<div class="a" style="left:1038px;top:32px;width:215px;height:154px;background:#3a3d42;border-radius:2px"></div>
<svg class="a" style="left:1046px;top:39px" width="15" height="16" viewBox="0 0 15 16"><rect x="5" y="1" width="5" height="8" rx="2.5" fill="#8a8d92"/><path d="M3,7 A4.5,4.5 0 0 0 12,7 M7.5,11.5 V14 M5,14.5 H10" fill="none" stroke="#8a8d92" stroke-width="1.1"/><path d="M1.5,14 L13.5,2" stroke="#e0453a" stroke-width="1.3"/></svg>
<div class="a" style="left:1068px;top:36px;width:1px;height:26px;background:#2c2e32"></div>
<div class="t" style="left:1079.5px;top:42.5px;font-size:11px;letter-spacing:0.1px;color:#fff">正在讲话: 吴利娟;</div>
<svg class="a" style="left:1202px;top:36px" width="44" height="24" viewBox="0 0 44 24"><g fill="#55585d"><path d="M14,2 L22,11 L14,21 Q12,23 10,21 L3,13 Q1,11 3,9 Z"/><path d="M28,3 Q30,1 32,3 L41,12 Q43,14 41,16 L36,21 L28,13 L20,21 L15,16 Z"/></g><path d="M14,2 L22,11 L28,3" fill="#4a4d52"/></svg>
<div class="a" style="left:1039px;top:65px;width:213px;height:120px;background:linear-gradient(90deg,#b87a4a,#cf9a66 30%,#c8905c 70%,#b47848);border-radius:1px"></div>
<div class="a" style="left:1044px;top:70px;width:203px;height:111px;background:radial-gradient(ellipse at 45% 40%,#245a45 0%,#1f4f3c 55%,#183e30 100%)"></div>
<svg class="a" style="left:1044px;top:70px" width="203" height="111" viewBox="0 0 203 111">
<defs><linearGradient id="hair" x1="0" y1="0" x2="0" y2="1"><stop offset="0" stop-color="#a0a09e"/><stop offset="0.4" stop-color="#6e6e6c"/><stop offset="1" stop-color="#2e2e2c"/></linearGradient>
<linearGradient id="face" x1="0" y1="0" x2="0" y2="1"><stop offset="0" stop-color="#ece2da"/><stop offset="0.55" stop-color="#dccbc0"/><stop offset="1" stop-color="#c4a898"/></linearGradient>
<linearGradient id="shirt" x1="0" y1="0" x2="1" y2="0"><stop offset="0" stop-color="#7a8292"/><stop offset="0.5" stop-color="#96a0b2"/><stop offset="1" stop-color="#848c9c"/></linearGradient>
<filter id="bl" x="-10%" y="-10%" width="120%" height="120%"><feGaussianBlur stdDeviation="0.7"/></filter></defs>
<g filter="url(#bl)">
<path d="M58,112 Q66,92 92,88 L128,88 Q158,93 166,112 Z" fill="url(#shirt)"/>
<path d="M100,88 L110,103 L122,88 Z" fill="#4e5462"/>
<path d="M97,80 H123 V92 Q110,99 97,92 Z" fill="#c2a394"/>
<path d="M88,46 Q88,31 110,31 Q133,31 133,46 L133,62 Q132,79 121,89 Q110,95 99,89 Q88,79 87,62 Z" fill="url(#face)"/>
<path d="M85,60 Q82,28 94,22 Q104,18 114,19 Q132,21 135,36 Q139,50 135,62 L132,44 Q126,33 112,32 Q97,33 90,42 L88,60 Z" fill="url(#hair)"/>
<g fill="none" stroke="#34282a" stroke-width="1.6"><rect x="87.5" y="50" width="20" height="13" rx="6"/><rect x="111.5" y="50" width="20" height="13" rx="6"/><path d="M107.5,55 H111.5 M131.5,54 L135,53"/></g>
<path d="M96,76 Q104,72 112,75 Q106,82 96,76Z" fill="#b08a80"/><path d="M108,64 Q106,70 110,71" fill="none" stroke="#b89888" stroke-width="1"/>
<path d="M122,112 Q124,100 132,95 Q142,93 148,112 Z" fill="#cbb0a4"/>
<path d="M163,110 L169,79 L172,80 L166,110 Z" fill="#d6a23a"/>
<rect x="172" y="76" width="5" height="35" fill="#e8e4cc"/><rect x="177" y="82" width="5" height="29" fill="#6e5c52"/><rect x="182" y="84.5" width="2" height="26" fill="#c82a2a"/><rect x="184" y="82.7" width="3" height="28" fill="#b8b07a"/><rect x="187" y="82" width="3.5" height="29" fill="#2a78c8"/><rect x="190.5" y="80" width="6" height="31" fill="#e8b232"/><rect x="196.6" y="84.5" width="6.4" height="26" fill="#4a3c38"/>
</g>
</svg>
<div class="a" style="left:1039px;top:166px;width:59px;height:17px;background:rgba(25,28,26,0.7)"></div>
<svg class="a" style="left:1044px;top:167px" width="13" height="15" viewBox="0 0 13 15"><rect x="3.5" y="0.5" width="6" height="9" rx="3" fill="#3ec43e"/><path d="M1.5,7 A5,5 0 0 0 11.5,7 M6.5,12 V14 M4,14.3 H9" fill="none" stroke="#fff" stroke-width="1.2"/></svg>
<div class="t" style="left:1061px;top:171px;font-size:11px;color:#fff">吴利娟</div>
</body></html>
